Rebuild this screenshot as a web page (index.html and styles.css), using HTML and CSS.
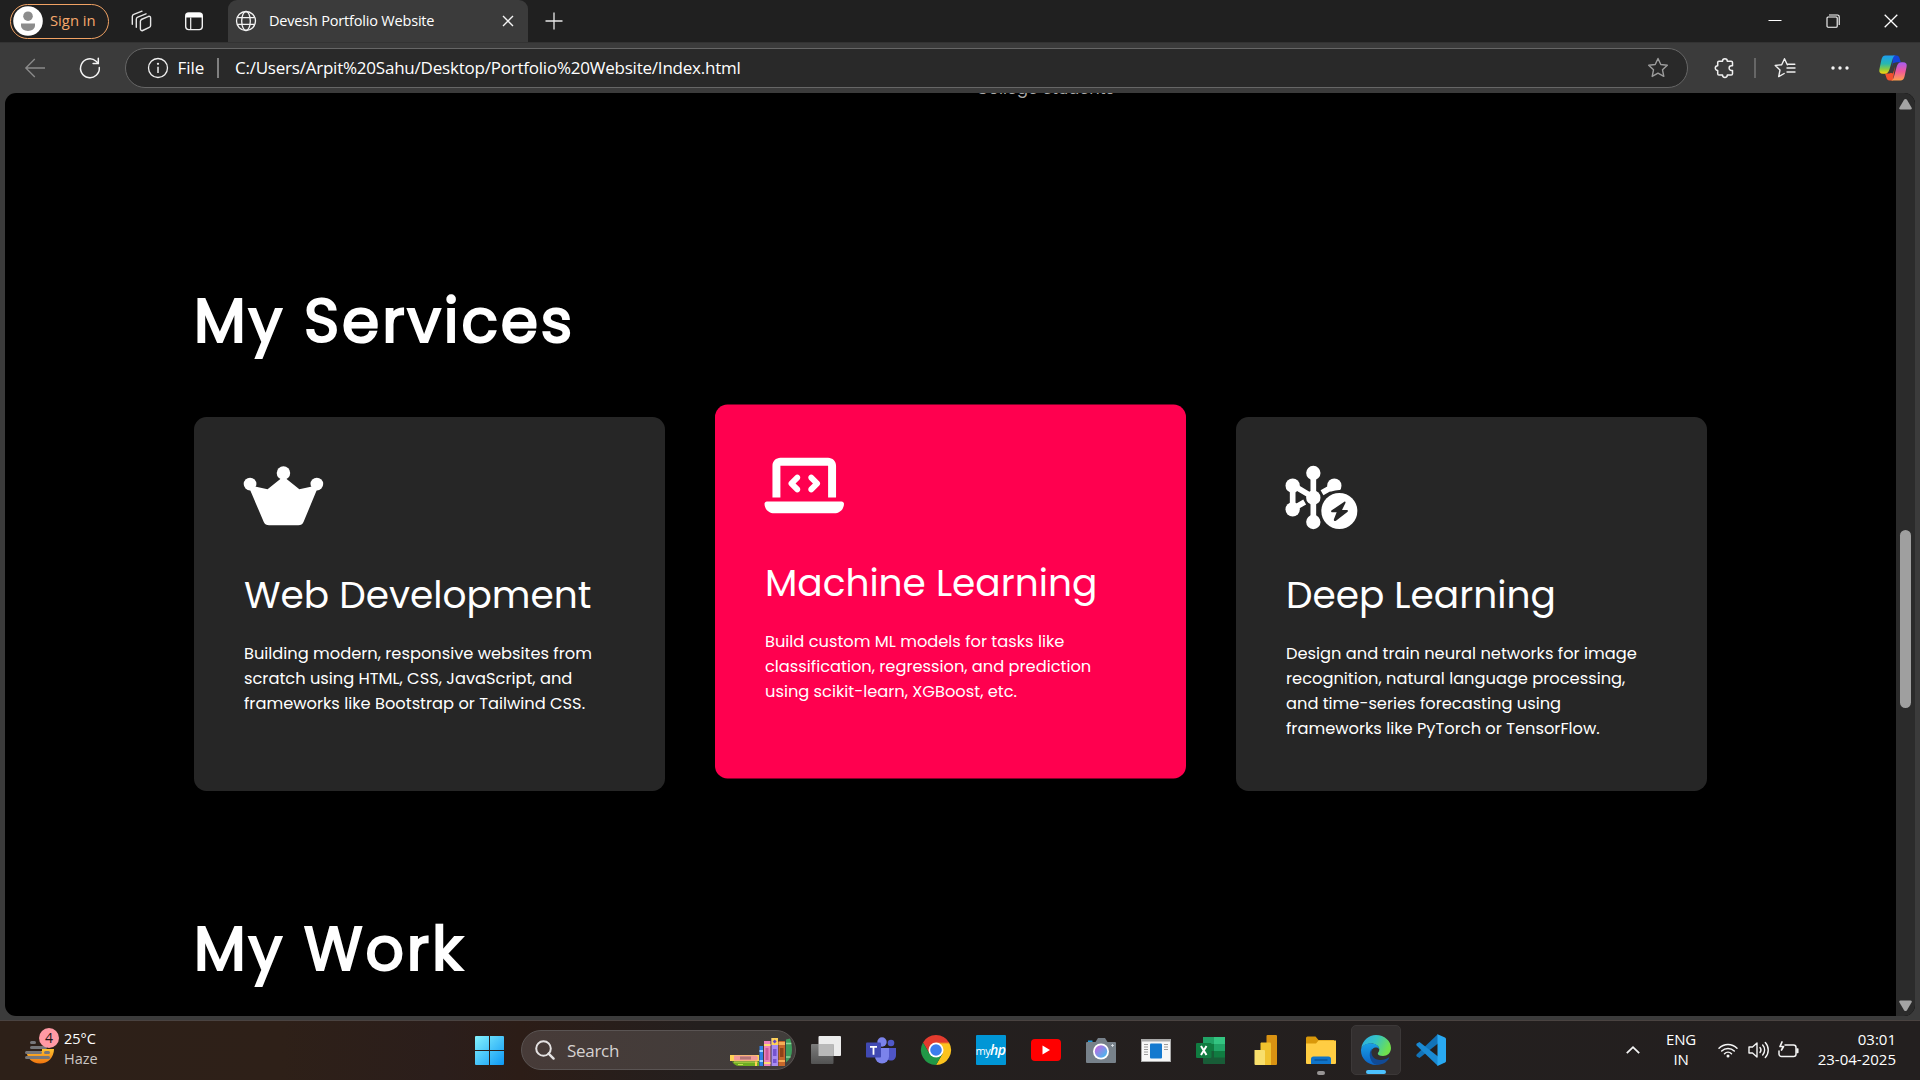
FILE: index.html
```html
<!DOCTYPE html>
<html lang="en">
<head>
<meta charset="utf-8">
<title>Devesh Portfolio Website</title>
<link rel="stylesheet" href="styles.css">
</head>
<body>
<div class="desktop">
  <header class="tabbar">
    <div class="signin">
      <svg class="avatar" width="30" height="30" viewBox="0 0 30 30"><circle cx="15" cy="15" r="14.8" fill="#fff"/><circle cx="15" cy="10.2" r="4.8" fill="#8c8c8c"/><path d="M8 17.5h14v1.8c0 3.6-3 5.6-7 5.6s-7-2-7-5.6z" fill="#8c8c8c"/></svg>
      <span>Sign in</span>
    </div>
    <svg class="workspaces" width="22" height="22" viewBox="0 0 22 22" fill="none" stroke="#e6e6e6" stroke-width="1.4" stroke-linejoin="round" stroke-linecap="round"><path d="M11.300 9.500 18 6.600a1.600 1.600 0 0 1 2.600 1.300v7.600a2 2 0 0 1-1.300 1.900l-6.600 3.100a1.600 1.600 0 0 1-2.300-1.400v-7.800a2 2 0 0 1 1.200-1.800z"/><path d="M6.300 17.200V9.300a2.400 2.400 0 0 1 1.500-2.200L16 3.800"/><path d="M2.300 14.200V6.600a2.400 2.400 0 0 1 1.500-2.200L12 1.200"/></svg>
    <svg class="vtabs" width="22" height="22" viewBox="0 0 22 22" fill="none"><rect x="2.700" y="3" width="16.600" height="16.600" rx="3" stroke="#f2f2f2" stroke-width="1.400"/><path d="M2.700 7.500V6a3 3 0 0 1 3-3h10.600a3 3 0 0 1 3 3v1.500z" fill="#fff"/><path d="M7.700 7.500v12" stroke="#f2f2f2" stroke-width="1.200"/></svg>
    <div class="tab">
      <svg width="22" height="22" viewBox="0 0 22 22" fill="none" stroke="#f4f4f4" stroke-width="1.300"><circle cx="11" cy="11" r="9.500"/><ellipse cx="11" cy="11" rx="4.300" ry="9.500"/><path d="M2.300 7.700h17.400M2.300 14.300h17.400"/></svg>
      <span class="tab-title">Devesh Portfolio Website</span>
      <svg width="12" height="12" viewBox="0 0 12 12" stroke="#f4f4f4" stroke-width="1.400"><path d="m1 1 10 10M11 1 1 11"/></svg>
    </div>
    <svg class="newtab" width="18" height="18" viewBox="0 0 18 18" stroke="#e8e8e8" stroke-width="1.300"><path d="M9 .5v17M.5 9h17"/></svg>
    <div class="winctl">
      <svg width="14" height="14" viewBox="0 0 14 14" stroke="#fff" stroke-width="1"><path d="M.5 6.500h13"/></svg>
      <svg width="14" height="14" viewBox="0 0 14 14" fill="none" stroke="#fff" stroke-width="1.100"><rect x="1" y="3" width="10.200" height="10.200" rx="1"/><path d="M3 1h8.500a1.700 1.700 0 0 1 1.700 1.700v8.300"/></svg>
      <svg width="14" height="14" viewBox="0 0 14 14" stroke="#fff" stroke-width="1.300"><path d="m.7.7 12.600 12.600M13.300.7.7 13.300"/></svg>
    </div>
  </header>

  <div class="toolbar">
    <svg width="20" height="20" viewBox="0 0 20 20" fill="none" stroke="#8b8b8b" stroke-width="1.300"><path d="M20 10H.8M9.800 1 .8 10l9 9"/></svg>
    <svg class="reload" width="22" height="22" viewBox="0 0 22 22" fill="none" stroke="#f4f4f4" stroke-width="1.500" stroke-linecap="round"><path d="M20.300 10.500a9.400 9.400 0 1 1-3.200-6.300l1.900 1.900"/><path d="M19.300 1.200v5.200h-5.200"/></svg>
    <div class="omnibox">
      <svg width="22" height="22" viewBox="0 0 22 22" fill="none" stroke="#f0f0f0" stroke-width="1.300"><circle cx="11" cy="11" r="9.500"/><path d="M11 9.800v6.200" stroke-width="1.500"/><circle cx="11" cy="6.800" r=".5"/></svg>
      <span class="scheme">File</span>
      <i class="sep"></i>
      <span class="url">C:/Users/Arpit%20Sahu/Desktop/Portfolio%20Website/Index.html</span>
      <svg class="star" width="22" height="22" viewBox="0 0 22 22" fill="none" stroke="#9c9c9c" stroke-width="1.400" stroke-linejoin="round"><path d="m11 1.500 2.800 6 6.500.8-4.800 4.500 1.300 6.600-5.800-3.300-5.800 3.300 1.300-6.600L1.700 8.300l6.500-.8z"/></svg>
    </div>
    <svg class="ext" width="22" height="22" viewBox="0 0 22 22" fill="none" stroke="#f0f0f0" stroke-width="1.500" stroke-linejoin="round"><path d="M5 4.200h3.500a2.400 2.400 0 0 1 4.800 0h3.900a1.300 1.300 0 0 1 1.300 1.300v3.200h-1a2.400 2.400 0 0 0 0 4.800h1v3.200a1.300 1.300 0 0 1-1.300 1.300h-3.900a2.400 2.400 0 0 1-4.800 0H5a1.300 1.300 0 0 1-1.300-1.300v-3.200a2.400 2.400 0 0 1 0-4.800V5.500A1.300 1.300 0 0 1 5 4.200z"/></svg>
    <i class="sep"></i>
    <svg class="favs" width="22" height="22" viewBox="0 0 22 22" fill="none" stroke="#f0f0f0" stroke-width="1.400" stroke-linejoin="round" stroke-linecap="round"><path d="M13.500 7.700h-.2L10.500 1.700l-2.800 6-6.500.8 4.800 4.500-1.300 6.600 5.500-3.100M13 11h8M13 15h8M13.800 7.200h7"/></svg>
    <svg class="more" width="20" height="6" viewBox="0 0 20 6" fill="#f4f4f4"><circle cx="3" cy="3" r="1.700"/><circle cx="10" cy="3" r="1.700"/><circle cx="17" cy="3" r="1.700"/></svg>
    <svg class="copilot" width="28" height="26" viewBox="0 0 28 26">
      <defs>
        <linearGradient id="ca" x1="0" y1="0" x2="0" y2="1"><stop offset="0" stop-color="#1d9df1"/><stop offset=".45" stop-color="#27b7b0"/><stop offset=".75" stop-color="#8ccb3e"/><stop offset="1" stop-color="#ffd20c"/></linearGradient>
        <linearGradient id="cb" x1="0" y1="0" x2="0" y2="1"><stop offset="0" stop-color="#a55cf2"/><stop offset=".5" stop-color="#f0589b"/><stop offset="1" stop-color="#ffa04c"/></linearGradient>
      </defs>
      <path d="M14 .4h3.500c2 0 2.700 1.500 3.300 3.500l1 3.300h-4c-2 0-3 .8-3.500 2.300L13 14z" fill="#1544d8"/>
      <path d="M14 25.600h-3.500c-2 0-2.700-1.500-3.300-3.500L6 18.600h4c1.500 0 2.500-1 3-2.500l3-5z" fill="#f4502f"/>
      <path d="M6.500.4H17c-2 0-2.800 1.700-3.300 3.400L10.600 14c-.9 3-2.100 4.800-5 4.800H4c-3 0-4.200-1.700-3.600-4.500l2-9.500C3.100 1.900 4.300.4 6.500.4z" fill="url(#ca)"/>
      <path d="M21.500 25.600H11.500c2 0 2.800-1.700 3.300-3.400L17.600 12c.9-3 2.100-4.800 5-4.800H24c3 0 4.200 1.700 3.600 4.500l-2 9.500c-.7 2.900-1.900 4.400-4.100 4.400z" fill="url(#cb)"/>
      <path d="M15.500 8.500 12.500 18" stroke="#3b3b3b" stroke-width="3"/>
    </svg>
  </div>

  <div class="viewport">
    <main class="page">
      <p class="about-last">College Students</p>
      <section class="services">
        <h1 class="sub-title">My Services</h1>
        <div class="cards">
          <article class="card">
            <svg class="card-icon" width="79.500" height="64" viewBox="0.300 0.200 80 64" fill="#fff"><circle cx="6.400" cy="18.200" r="6.400"/><circle cx="40" cy="7" r="6.800"/><circle cx="73.600" cy="18.200" r="6.400"/><path d="M5.500 22 12.500 20.800 24 23.500 40 10.500 56 23.500 67.500 20.800 74.500 22 60.200 56.300C59.200 58.700 57.600 59.600 55 59.600H25.500C23 59.600 21.200 58.700 20.200 56.300z"/></svg>
            <h2>Web Development</h2>
            <p>Building modern, responsive websites from scratch using HTML, CSS, JavaScript, and frameworks like Bootstrap or Tailwind CSS.</p>
          </article>
          <article class="card active">
            <svg class="card-icon" width="79.500" height="64" viewBox="4 0 640 512" fill="#fff"><path d="M64 96c0-35.300 28.700-64 64-64h384c35.300 0 64 28.700 64 64v256h-64V96H128v256H64zM0 403.200C0 392.600 8.600 384 19.200 384h601.600c10.600 0 19.200 8.600 19.200 19.200 0 42.400-34.400 76.800-76.800 76.800H76.800C34.400 480 0 445.600 0 403.200zM281 209l-31 31 31 31c9.400 9.400 9.400 24.600 0 33.900s-24.600 9.400-33.900 0l-48-48c-9.400-9.400-9.400-24.600 0-33.900l48-48c9.400-9.400 24.600-9.400 33.900 0s9.400 24.600 0 33.900zm112-34 48 48c9.400 9.400 9.400 24.600 0 33.900l-48 48c-9.400 9.400-24.600 9.400-33.900 0s-9.400-24.600 0-33.900l31-31-31-31c-9.400-9.400-9.400-24.600 0-33.900s24.600-9.400 33.900 0z"/></svg>
            <h2>Machine Learning</h2>
            <p>Build custom ML models for tasks like classification, regression, and prediction using scikit-learn, XGBoost, etc.</p>
          </article>
          <article class="card">
            <svg class="card-icon" width="72" height="64" viewBox="2 1 216 192">
              <path fill="none" stroke="#fff" stroke-width="17" d="M84 22v146M22 60v70M22 58l62 37M22 130l36-21M147 60l-37 21"/>
              <g fill="#fff"><circle cx="84" cy="22" r="21.500"/><circle cx="22" cy="60" r="21.500"/><circle cx="22" cy="131" r="21.500"/><circle cx="84" cy="169" r="21.500"/><circle cx="147" cy="60" r="21.500"/><circle cx="84" cy="96" r="21.500"/></g>
              <circle cx="162" cy="136" r="63" fill="#262626"/><circle cx="162" cy="136" r="54" fill="#fff"/>
              <path d="M177 108 139 134c-3 2-2 6 2 6h13l-8 20c-2 5 2 8 6 5l34-26c3-3 2-6-2-6h-14l10-20c2-5-1-7-3-5z" fill="#262626"/>
            </svg>
            <h2>Deep Learning</h2>
            <p>Design and train neural networks for image recognition, natural language processing, and time-series forecasting using frameworks like PyTorch or TensorFlow.</p>
          </article>
        </div>
      </section>
      <section class="work"><h1 class="sub-title">My Work</h1></section>
    </main>
    <div class="scrollbar">
      <svg width="13" height="11" viewBox="0 0 13 11" fill="#a3a3a3"><path d="M6.500 0c.8 0 1.200.4 1.600 1l4.400 7.500c.7 1.300.1 2-1 2h-10c-1.100 0-1.700-.7-1-2L4.900 1C5.300.4 5.700 0 6.500 0z"/></svg>
      <i class="thumb"></i>
      <svg class="down" width="13" height="11" viewBox="0 0 13 11" fill="#a3a3a3"><path d="M6.500 11c.8 0 1.200-.4 1.600-1l4.400-7.500c.7-1.300.1-2-1-2h-10c-1.100 0-1.700.7-1 2L4.900 10c.4.600.8 1 1.600 1z"/></svg>
    </div>
  </div>

  <footer class="taskbar">
    <div class="weather">
      <div class="weather-icon">
        <svg width="30" height="26" viewBox="0 0 30 26"><defs><linearGradient id="sun" x1="0" y1="0" x2="0" y2="1"><stop offset="0" stop-color="#ffc22e"/><stop offset="1" stop-color="#f0740f"/></linearGradient></defs><path d="M1 11h28c0 8.500-6 14.500-14 14.500S1.500 20 1 11z" fill="url(#sun)"/><path d="M0 8h17v5H0z" fill="#2d2019"/><path d="M6.500 4.500h3M6.500 9.500h14M1.500 14.500h14M20.500 14.500h3M1.500 19.500h22" stroke="#77777a" stroke-width="3" stroke-linecap="round"/></svg>
        <b class="badge">4</b>
      </div>
      <div class="weather-text"><span>25°C</span><span class="muted">Haze</span></div>
    </div>
    <svg class="start" width="29" height="29" viewBox="0 0 29 29"><defs><linearGradient id="win" x1="0" y1="0" x2="1" y2="1"><stop offset="0" stop-color="#84f2fd"/><stop offset="1" stop-color="#0d98f5"/></linearGradient></defs><path d="M0 1a1 1 0 0 1 1-1h13v14H0zM15 0h13a1 1 0 0 1 1 1v13H15zM0 15h14v14H1a1 1 0 0 1-1-1zM15 15h14v13a1 1 0 0 1-1 1H15z" fill="url(#win)"/></svg>
    <div class="search">
      <svg width="20" height="20" viewBox="0 0 20 20" fill="none" stroke="#e4e2e2" stroke-width="2"><circle cx="8.500" cy="8.500" r="7.300"/><path d="m13.600 13.600 5 5" stroke-width="2.400" stroke-linecap="round"/></svg>
      <span>Search</span>
      <svg class="books" width="62" height="29" viewBox="0 0 62 29">
        <path d="M0 17h29v6H0z" fill="#ffd257"/><path d="M4 17.500h22a2.600 2.600 0 0 1 0 5H4z" fill="#f29a9a"/><path d="M10 18.500h11v3H10z" fill="#b37575"/>
        <path d="M2 23.500h27V28H9c-3 0-5.500-2-7-4.500z" fill="#6fae22"/><path d="M4 24h24M8 26.500h5" stroke="#c6dc55"/><path d="M25 23.500h2V28h-2z" fill="#ffd257"/>
        <path d="M29.500 8H33v20h-3.500z" fill="#2f80e6"/><path d="M29.500 12H33v2h-3.500zM29.500 22H33v2h-3.500z" fill="#9cd2ff"/>
        <path d="M34 3h6.500v25H34z" fill="#ec84bd"/><path d="M34 6h6.500v2H34zM34 24h6.500v2H34z" fill="#ffdc70"/><path d="M35.500 10h3v12h-3z" fill="#c95a9a"/>
        <path d="M41.500 0H48v28h-6.500z" fill="#a98cf0"/><path d="M41.500 0H48v7h-6.500z" fill="#ffd257"/><path d="m44.700 1.500 2 2-2 2-2-2z" fill="#6546c4"/><path d="M43 11h3.500v7H43zM43 21h3.500v4H43z" fill="#7553d0"/>
        <path d="M48.500 3H55v25h-6.500z" fill="#c6682c"/><path d="M48.500 4H55v3h-6.500zM48.500 22H55v2h-6.500z" fill="#f6ae55"/><path d="M50 10h3.500v9H50z" fill="#8f4218"/>
        <path d="M56 1.500 60 .5c1.200 3 2 7 2 11.500 0 5-2 9.500-6 12.500z" fill="#3e9c5c"/><path d="M56 5.500h5.300M56 19h4.500" stroke="#8fd39a" stroke-width="1.500"/>
      </svg>
    </div>
    <nav class="apps">
      <div class="app"><svg width="30" height="28" viewBox="0 0 30 28"><defs><linearGradient id="tv" x1="0" y1="0" x2="0" y2="1"><stop offset="0" stop-color="#7c7c7c"/><stop offset="1" stop-color="#525252"/></linearGradient></defs><rect x="7.500" y="0" width="22.500" height="20" rx="1" fill="#ececec"/><rect x="0" y="8" width="22.500" height="20" rx="1" fill="url(#tv)"/><path d="M7.500 8h15v12h-15z" fill="#b9b9b9"/></svg></div>
      <div class="app"><svg width="30" height="27" viewBox="0 0 30 27"><circle cx="25" cy="6" r="3.300" fill="#5059c9"/><path d="M19 11h11v7c0 3.500-2 5.500-5 5.500s-5-2-5-5z" fill="#4f55c6"/><circle cx="16" cy="5" r="4.700" fill="#7b83eb"/><path d="M9 11h14v8.500a7 7 0 0 1-14 0z" fill="#7b83eb"/><rect y="5.500" width="15" height="15" rx="1" fill="#4049b3"/><path d="M4 9h7v1.700H8.400v7H6.600v-7H4z" fill="#fff"/></svg></div>
      <div class="app"><svg width="30" height="30" viewBox="0 0 48 48"><path fill="#e33b2e" d="M24 24 3.200 12A24 24 0 0 1 44.800 12z"/><path fill="#fcc31e" d="M44.800 12A24 24 0 0 1 24 48l10.400-18L24 12z"/><path fill="#e33b2e" d="M3.200 12 13.600 30 24 13h20.700v-1z"/><path fill="#219847" d="M3.200 12 13.600 30l10 6 10.800-6L24 48A24 24 0 0 1 3.200 12z"/><circle cx="24" cy="24" r="12" fill="#fff"/><circle cx="24" cy="24" r="9.300" fill="#3b7ded"/></svg></div>
      <div class="app"><span class="hp">my<b>hp</b></span></div>
      <div class="app"><svg width="30" height="22" viewBox="0 0 30 22"><rect width="30" height="22" rx="4" fill="#f00"/><path d="M11.500 6.500 19 11l-7.500 4.500z" fill="#fff"/></svg></div>
      <div class="app"><svg width="30" height="25" viewBox="0 0 30 25"><defs><linearGradient id="lens" x1="0" y1="0" x2="1" y2="1"><stop offset="0" stop-color="#d05de0"/><stop offset="1" stop-color="#36c4ee"/></linearGradient></defs><path d="M2 2.500h4.500V5H2z" fill="#1f9de0"/><path d="M1 4h8.500l2.500-4h7l2.500 4H29a1 1 0 0 1 1 1v19a1 1 0 0 1-1 1H1a1 1 0 0 1-1-1V5a1 1 0 0 1 1-1z" fill="#77818a"/><circle cx="15" cy="13.500" r="8" fill="#fff"/><circle cx="15" cy="13.500" r="6.200" fill="url(#lens)"/><path d="M25 7.500h3M26.500 6v3" stroke="#dfe5ea" stroke-width=".8"/></svg></div>
      <div class="app"><svg width="30" height="23" viewBox="0 0 30 23"><path d="M0 0h30v23H0z" fill="#aaa"/><path d="M1 2.500h28V22H1z" fill="#f7f7f7"/><rect x="9" y="4.500" width="12" height="15" rx="1" fill="#1479cf"/><path d="M3 5.500h4M3 8h4M3 10.500h4M3 13h4M3 15.500h4M23 5.500h4M23 8h4M23 10.500h4" stroke="#9a9a9a"/></svg></div>
      <div class="app"><svg width="30" height="28" viewBox="0 0 30 28"><path d="M7 1h11v7H7z" fill="#21a366"/><path d="M18 1h11v7H18z" fill="#33c481"/><path d="M7 8h11v7H7z" fill="#107c41"/><path d="M18 8h11v7H18z" fill="#21a366"/><path d="M7 15h22v13H8a1 1 0 0 1-1-1z" fill="#185c37"/><path d="M18 15h11v6.500H18z" fill="#107c41"/><rect y="7" width="15.500" height="15" rx="1" fill="#107c41"/><path d="m5 10 5.500 9M10.500 10 5 19" stroke="#fff" stroke-width="2"/></svg></div>
      <div class="app"><svg width="30" height="30" viewBox="0 0 30 30"><rect x="15.500" y="0" width="10.500" height="30" rx="1" fill="#d99212"/><path d="M10 7.500h9a1 1 0 0 1 1 1V30H9.500V8.500z" fill="#f0c22e"/><path d="M4 15h9a1 1 0 0 1 1 1v14H4.500a1 1 0 0 1-1-1V15.500z" fill="#f8df6c"/></svg></div>
      <div class="app"><svg width="30" height="28" viewBox="0 0 30 28"><path d="M0 2a1.500 1.500 0 0 1 1.500-1.500h8L12.500 4H28v5H0z" fill="#d9980a"/><path d="M0 7.500h10l2.500-3H30V27a1 1 0 0 1-1 1H1a1 1 0 0 1-1-1z" fill="#ffcd43"/><path d="M5 28v-5a2.500 2.500 0 0 1 2.500-2.500h15A2.500 2.500 0 0 1 25 23v5z" fill="#0f74ca"/><path d="M8.500 24h13" stroke="#0a4f92" stroke-width="1.300"/></svg><i class="dot"></i></div>
      <div class="app current"><svg width="30" height="30" viewBox="0 0 30 30"><defs><linearGradient id="e1" x1="0" y1="0" x2="1" y2=".4"><stop offset="0" stop-color="#2ba9e8"/><stop offset=".5" stop-color="#35c4c4"/><stop offset="1" stop-color="#6fe04d"/></linearGradient><linearGradient id="e2" x1="0" y1="0" x2="0" y2="1"><stop offset="0" stop-color="#1aa0e6"/><stop offset="1" stop-color="#0b62c4"/></linearGradient></defs><path d="M.2 13.500C1.500 5.500 7.500 0 15 0c8.500 0 15 6 15 13 0 5-3.800 8-8 8-3.500 0-5.200-1.200-5.200-2.500 0-1 1.500-1.700 1.500-4C18.300 11 14.500 8.500 10 8.500 5 8.500 1.500 11 .2 13.500z" fill="url(#e1)"/><path d="M.1 14C1.200 10.500 5 8.200 9.500 8.200c5 0 8.800 2.800 8.800 6-1-1.500-2.500-1.800-4-1.700-3.500.5-5 4-4.500 7.500.6 4.500 4 8.500 8 9.500-1 .3-1.800.5-2.800.5C6.500 30 0 23.500 0 15.500z" fill="url(#e2)"/><path d="M11 13.500c-1.800 5 .5 11 7.500 11.500 4 .3 7-1 9-2.500.5-.3 1 .1.700.6C26 27 22 30 16 30 9 29 6.500 18 11 13.500z" fill="#114a95"/></svg><i class="bar"></i></div>
      <div class="app"><svg width="30" height="32" viewBox="0 0 30 32"><path d="M22 0v9.500L3.500 24 .8 22.500c-.6-.6-.6-1.500 0-2.200z" fill="#1273b8"/><path d="M22 32v-9.500L3.500 8 .8 9.500c-.6.600-.6 1.500 0 2.200z" fill="#1a8ad4"/><path d="M21.500.2 29 3.500c.6.300 1 .9 1 1.600v21.800c0 .7-.4 1.300-1 1.600l-7.500 3.400z" fill="#29a9f2"/></svg></div>
    </nav>
    <div class="tray">
      <svg class="chev" width="14" height="8" viewBox="0 0 14 8" fill="none" stroke="#f4f4f4" stroke-width="1.800"><path d="m.8 7.200 6.200-6 6.200 6"/></svg>
      <div class="lang"><span>ENG</span><span>IN</span></div>
      <svg class="wifi" width="20" height="16" viewBox="0 0 20 16" fill="none" stroke="#f4f4f4" stroke-width="1.500" stroke-linecap="round"><path d="M1 6.200a12.600 12.600 0 0 1 18 0M3.700 9a8.900 8.900 0 0 1 12.600 0M6.500 11.700a5 5 0 0 1 7 0"/><circle cx="10" cy="14" r="1.500" fill="#f4f4f4" stroke="none"/></svg>
      <svg class="vol" width="21" height="18" viewBox="0 0 21 18" fill="none" stroke="#f4f4f4" stroke-width="1.400" stroke-linecap="round" stroke-linejoin="round"><path d="M1 6h3.500L9 2v14l-4.500-4H1zM12 6.500a4 4 0 0 1 0 5M14.700 4a7.500 7.500 0 0 1 0 10M17.300 1.500a11 11 0 0 1 0 15"/></svg>
      <svg class="bat" width="21" height="18" viewBox="0 0 21 18" fill="none" stroke="#f4f4f4" stroke-width="1.500" stroke-linecap="round" stroke-linejoin="round"><path d="M7 4h8.500A2.500 2.500 0 0 1 18 6.500v6.500a2.500 2.500 0 0 1-2.500 2.500h-12A2.500 2.500 0 0 1 1 13V10"/><path d="M19 8v3.500h.8V8z"/><path d="M4 1 2 5.500h3.500L3.500 9" stroke-width="1.700"/></svg>
      <div class="clock"><span>03:01</span><span>23-04-2025</span></div>
    </div>
  </footer>
</div>
</body>
</html>
```
FILE: styles.css
```css
* { box-sizing: border-box; margin: 0; padding: 0; }
body { background: #3b3b3b; overflow: hidden; font-family: "Segoe UI", "Open Sans", "Noto Sans", sans-serif; color: #fff; }
svg { display: block; flex: none; overflow: visible; }
.desktop { width: 1920px; height: 1080px; display: flex; flex-direction: column; overflow: hidden; }

/* Tab strip */
.tabbar { height: 42px; flex: none; background: #202020; display: flex; align-items: center; padding-left: 10px; }
.signin { width: 99px; height: 35px; border: 1.5px solid #f0a264; border-radius: 18px; display: flex; align-items: center; padding-left: 2px; gap: 7px; font-size: 14.8px; color: #f5a86c; white-space: nowrap; }
.signin span { padding-bottom: 2px; }
.workspaces { margin-left: 21px; }
.vtabs { margin-left: 31px; }
.tab { width: 300px; height: 42px; margin-left: 23px; background: #3b3b3b; border-radius: 9px 9px 0 0; display: flex; align-items: center; padding: 0 14px 0 7px; }
.tab-title { flex: 1; margin-left: 12px; padding-bottom: 2px; font-size: 14.5px; letter-spacing: -0.19px; white-space: nowrap; }
.newtab { margin-left: 17px; }
.winctl { margin-left: auto; display: flex; }
.winctl svg { margin: 0 22px; }

/* Address row */
.toolbar { height: 51px; flex: none; background: #3b3b3b; border-top: 1px solid #333; display: flex; align-items: center; padding-left: 25px; }
.reload { margin-left: 34px; }
.omnibox { width: 1563px; height: 40px; margin-left: 24px; background: #292929; border: 1.5px solid #666; border-radius: 20px; display: flex; align-items: center; padding: 0 18.5px 0 20.5px; white-space: nowrap; font-size: 17px; }
.scheme, .url { padding-bottom: 2px; }
.scheme { margin-left: 9px; }
.sep { width: 2px; height: 20px; background: #666; }
.omnibox .sep { margin: 0 16px 0 13px; width: 1.5px; background: #808080; }
.url { letter-spacing: -0.22px; }
.star { margin-left: auto; }
.ext { margin: 0 18px 0 26px; }
.favs { margin-left: 18px; }
.more { margin-left: 34px; }
.copilot { margin-left: 29px; }

/* Web page */
.viewport { height: 923px; flex: none; margin: 0 5px; display: flex; border-radius: 11px; overflow: hidden; background: #000; }
.page { width: 1891px; height: 923px; overflow: hidden; padding: 0 189px; font-family: Poppins, Inter, sans-serif; }
.about-last { margin: -17.5px 0 0 782px; font-size: 16.25px; line-height: 25px; color: #ababab; }
.services { padding-top: 173.5px; }
.sub-title { font-size: 60px; line-height: 94px; font-weight: 400; letter-spacing: 2.85px; -webkit-text-stroke: 2.2px #fff; }
.cards { display: grid; grid-template-columns: repeat(3, 471px); gap: 50px; margin-top: 49px; }
.card { background: #262626; border-radius: 12.5px; padding: 48.5px 50px 49px; height: 373.7px; }
.card.active { background: #ff004f; transform: translateY(-12.5px); }
.card h2 { margin-top: 37.5px; font-size: 37.5px; line-height: 56px; font-weight: 400; white-space: nowrap; }
.card p { margin-top: 17.5px; font-size: 16.25px; line-height: 25px; }
.work { padding-top: 111px; }
.scrollbar { width: 19px; background: #2b2b2b; display: flex; flex-direction: column; align-items: center; padding: 6px 0 5px; }
.thumb { width: 11px; height: 178px; margin-top: 420px; border-radius: 6px; background: #9f9f9f; }
.down { margin-top: auto; }

/* Taskbar */
.taskbar { height: 60px; flex: none; margin-top: 4px; border-top: 1px solid #4a4341; padding-bottom: 1px; background: linear-gradient(90deg, #2d2018 0, #2e2018 280px, #2b1e1b 440px, #2c1d17 520px, #241f1e 700px, #231f1f 100%); display: flex; align-items: center; font-size: 15px; }
.weather { width: 450px; margin-left: 25px; display: flex; align-items: center; }
.weather-icon { position: relative; padding-top: 1px; }
.badge { position: absolute; left: 14px; top: -9px; width: 20px; height: 20px; border-radius: 50%; background: #ff99a4; color: #1c1215; font-size: 14px; line-height: 20px; text-align: center; font-weight: 400; }
.weather-text { margin-left: 9px; font-size: 14.5px; }
.weather-text, .lang, .clock { padding-bottom: 2px; }
.weather-text span, .lang span, .clock span { display: block; line-height: 20px; white-space: nowrap; }
.weather-text .muted { color: #cbc6c3; }
.start { flex: none; }
.search { width: 275px; height: 40px; margin-left: 17px; border-radius: 20px; border: 1px solid #5a5453; background: linear-gradient(90deg, #473b38, #413d3b); display: flex; align-items: center; padding: 0 3px 0 13px; font-size: 17px; letter-spacing: -0.3px; color: #d6d2d1; }
.search span { margin-left: 12px; }
.books { margin: 5px 0 0 auto; }
.apps { display: grid; grid-template-columns: repeat(12, 55px); margin-left: 2px; }
.app { position: relative; height: 50px; display: flex; align-items: center; justify-content: center; }
.hp { width: 30px; height: 30px; border-radius: 1px; background: #0096d6; font-size: 11px; line-height: 29px; text-align: center; letter-spacing: -0.6px; }
.hp b { font-size: 14px; font-style: italic; font-weight: 600; }
.current { width: 50px; margin-left: 2.5px; border-radius: 5px; background: #332f2f; border: 1px solid #3c3838; }
.dot, .bar { position: absolute; bottom: 0; left: 50%; transform: translateX(-50%); height: 4px; border-radius: 2px; }
.dot { width: 8px; background: #989595; }
.bar { width: 20px; background: #4cc2ff; }
.tray { margin-left: auto; display: flex; align-items: center; padding-right: 24px; }
.lang { width: 40px; margin-left: 21px; text-align: center; letter-spacing: -0.2px; }
.wifi { margin-left: 17px; }
.vol { margin-left: 9.5px; }
.bat { margin-left: 9px; }
.clock { width: 97.5px; text-align: right; }
```
